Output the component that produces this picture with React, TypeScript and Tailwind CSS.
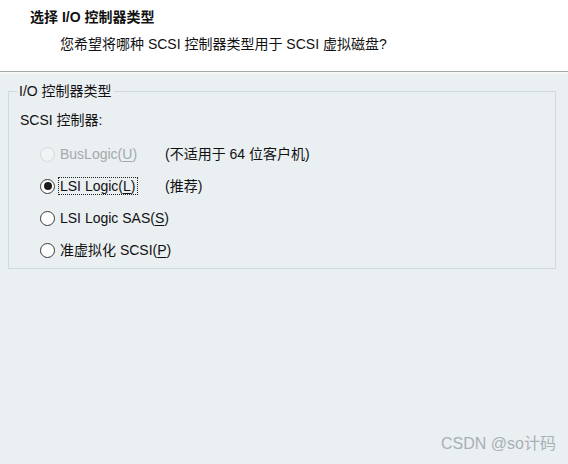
import React from 'react';

interface Option {
  id: string;
  label: string;
  mnemonic: string;
  note?: string;
  checked?: boolean;
  disabled?: boolean;
}

const options: Option[] = [
  { id: 'buslogic', label: 'BusLogic(', mnemonic: 'U', note: '(不适用于 64 位客户机)', disabled: true },
  { id: 'lsi', label: 'LSI Logic(', mnemonic: 'L', note: '(推荐)', checked: true },
  { id: 'sas', label: 'LSI Logic SAS(', mnemonic: 'S' },
  { id: 'pvscsi', label: '准虚拟化 SCSI(', mnemonic: 'P' },
];

function Radio({ checked, disabled }: { checked?: boolean; disabled?: boolean }) {
  return (
    <span
      className={`flex h-[15px] w-[15px] shrink-0 items-center justify-center rounded-full border ${
        disabled ? 'border-[#d4d9dc] bg-[#f1f4f5]' : 'border-[#3a3a3a] bg-white'
      }`}
    >
      {checked && <span className="h-[8px] w-[8px] rounded-full bg-[#1c1c1c]" />}
    </span>
  );
}

export default function App() {
  return (
    <div
      className="flex h-[464px] w-[568px] flex-col bg-[#eaeff2] text-[14px] text-[#111]"
      style={{ fontFamily: '"Liberation Sans", "Noto Sans CJK SC", sans-serif' }}
    >
      <div className="h-[72px] border-b border-[#a2aaa8] bg-white pl-[30px] pt-[7px]">
        <h1 className="text-[14px] font-bold leading-[20px]">选择 I/O 控制器类型</h1>
        <p className="mt-[7px] pl-[30px] leading-[20px]">您希望将哪种 SCSI 控制器类型用于 SCSI 虚拟磁盘?</p>
      </div>
      <div className="h-[2px] bg-[#f6f8f8]" />

      <fieldset className="mx-[8px] mt-[8px] h-[187px] w-[548px] border border-[#d3dadf] pl-[11px] pr-[8px]">
        <legend className="ml-[-3px] px-[2px] leading-[18px]">I/O 控制器类型</legend>
        <div className="mt-[10px] leading-[20px]">SCSI 控制器:</div>
        <div className="mt-[14px] flex flex-col gap-[12px] pl-[20px]">
          {options.map((o) => (
            <div key={o.id} className="flex h-[20px] items-center whitespace-nowrap">
              <Radio checked={o.checked} disabled={o.disabled} />
              <div className="ml-[4px] min-w-[106px]">
                <span
                  className={`px-[1px] leading-[18px] ${o.disabled ? 'text-[#a4a9ac]' : ''} ${
                    o.checked ? 'outline-1 outline-dotted outline-[#222]' : ''
                  }`}
                >
                  {o.label}
                  <span className="underline underline-offset-2">{o.mnemonic}</span>)
                </span>
              </div>
              {o.note && <span className="leading-[20px]">{o.note}</span>}
            </div>
          ))}
        </div>
      </fieldset>

      <div className="mt-auto mb-[8px] mr-[12px] self-end text-[16px] text-[#a9b0b4]">CSDN @so计码</div>
    </div>
  );
}
